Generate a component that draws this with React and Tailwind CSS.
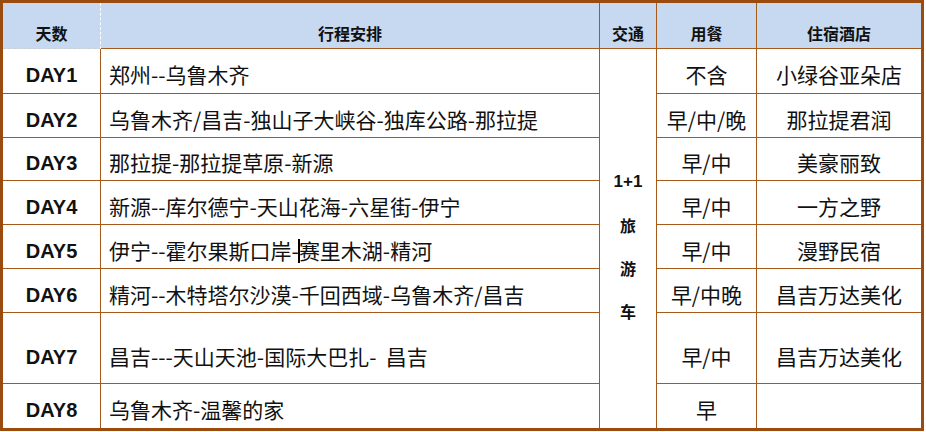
import React from "react";

const rows = [
  { day: "DAY1", route: "郑州--乌鲁木齐", meal: "不含", hotel: "小绿谷亚朵店", h: "h-[45px]" },
  { day: "DAY2", route: "乌鲁木齐/昌吉-独山子大峡谷-独库公路-那拉提", meal: "早/中/晚", hotel: "那拉提君润", h: "h-[44px]" },
  { day: "DAY3", route: "那拉提-那拉提草原-新源", meal: "早/中", hotel: "美豪丽致", h: "h-[43px]" },
  { day: "DAY4", route: "新源--库尔德宁-天山花海-六星街-伊宁", meal: "早/中", hotel: "一方之野", h: "h-[44px]" },
  { day: "DAY5", route: "伊宁--霍尔果斯口岸-", route2: "赛里木湖-精河", meal: "早/中", hotel: "漫野民宿", h: "h-[44px]" },
  { day: "DAY6", route: "精河--木特塔尔沙漠-千回西域-乌鲁木齐/昌吉", meal: "早/中晚", hotel: "昌吉万达美化", h: "h-[44px]" },
  { day: "DAY7", route: "昌吉---天山天池-国际大巴扎-  昌吉", meal: "早/中", hotel: "昌吉万达美化", h: "h-[71px]", tall: true },
  { day: "DAY8", route: "乌鲁木齐-温馨的家", meal: "早", hotel: "", h: "h-[44px]", last: true },
];

const cjk = "font-['Noto_Sans_CJK_SC',sans-serif]";

const ItineraryTable = () => {
  return (
    <div className="w-[926px] h-[432px] bg-white">
      <div
        className={`w-[924px] h-[431px] border-[3px] border-[#9a4c10] grid grid-cols-[98px_499px_57px_100px_164px] text-[#111] ${cjk}`}
      >
        {/* HEADER */}
        <div className="h-[46px] bg-[#c6d9f0] border-r border-r-white border-b border-dashed border-b-[#cfcfcf] flex items-end justify-center pb-[3px] text-[16px] font-bold">
          天数
        </div>
        <div className="h-[46px] bg-[#c6d9f0] border-r border-b border-[#a55a1c] flex items-end justify-center pb-[3px] text-[16px] font-bold">
          行程安排
        </div>
        <div className="h-[46px] bg-[#c6d9f0] border-r border-b border-[#a55a1c] flex items-end justify-center pb-[3px] text-[16px] font-bold">
          交通
        </div>
        <div className="h-[46px] bg-[#c6d9f0] border-r border-b border-[#a55a1c] flex items-end justify-center pb-[3px] text-[16px] font-bold">
          用餐
        </div>
        <div className="h-[46px] bg-[#c6d9f0] border-b border-[#a55a1c] flex items-end justify-center pb-[3px] text-[16px] font-bold">
          住宿酒店
        </div>

        {/* BODY */}
        {rows.map((r, i) => (
          <React.Fragment key={r.day}>
            <div
              className={`${r.h} border-r border-[#a55a1c] ${r.last ? "" : "border-b"} flex items-center justify-center ${r.tall ? "pt-[18px]" : "pt-[8px]"} font-['Liberation_Sans',sans-serif] font-bold text-[20px]`}
            >
              {r.day}
            </div>
            <div
              className={`${r.h} border-r border-[#a55a1c] ${r.last ? "" : "border-b"} flex items-center pl-[8px] ${r.tall ? "pt-[18px]" : "pt-[8px]"} text-[21px] whitespace-pre`}
            >
              {r.route}
              {r.route2 && (
                <>
                  <span className="inline-block w-[2px] h-[24px] bg-black -ml-[1px] mr-[-1px]" />
                  {r.route2}
                </>
              )}
            </div>
            {i === 0 && (
              <div className="row-span-8 border-r border-[#a55a1c] flex flex-col items-center justify-center pt-[16px] text-[16px] font-bold">
                <div className="h-[43px] flex items-center font-['Liberation_Sans',sans-serif] text-[17px]">1+1</div>
                <div className="h-[43px] flex items-center">旅</div>
                <div className="h-[43px] flex items-center">游</div>
                <div className="h-[43px] flex items-center">车</div>
              </div>
            )}
            <div
              className={`${r.h} border-r border-[#a55a1c] ${r.last ? "" : "border-b"} flex items-center justify-center ${r.tall ? "pt-[18px]" : "pt-[8px]"} text-[21px]`}
            >
              {r.meal}
            </div>
            <div
              className={`${r.h} border-[#a55a1c] ${r.last ? "" : "border-b"} flex items-center justify-center ${r.tall ? "pt-[18px]" : "pt-[8px]"} text-[21px]`}
            >
              {r.hotel}
            </div>
          </React.Fragment>
        ))}
      </div>
    </div>
  );
};

export default ItineraryTable;
